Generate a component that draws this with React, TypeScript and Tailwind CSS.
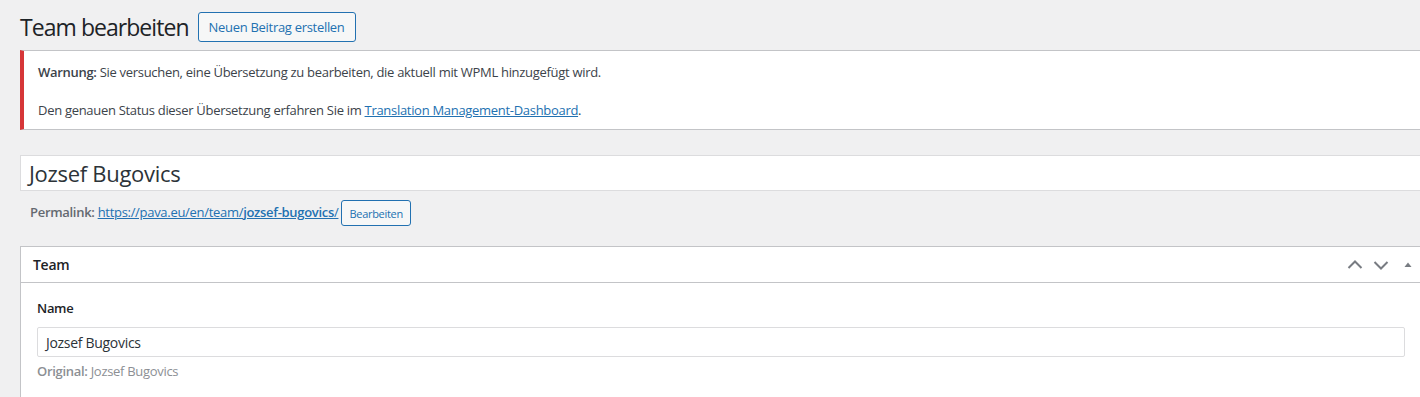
import { ReactNode } from 'react';

function ChevronUp() {
  return (
    <svg width="16" height="16" viewBox="0 0 16 16" fill="none" stroke="#787c82" strokeWidth="2">
      <path d="M1.5 11 L8 4.5 L14.5 11" />
    </svg>
  );
}

function ChevronDown() {
  return (
    <svg width="16" height="16" viewBox="0 0 16 16" fill="none" stroke="#787c82" strokeWidth="2">
      <path d="M1.5 5 L8 11.5 L14.5 5" />
    </svg>
  );
}

function Triangle() {
  return (
    <svg width="10" height="10" viewBox="0 0 10 10" fill="#787c82">
      <polygon points="1.5,7 5,2.5 8.5,7" />
    </svg>
  );
}

function OutlineButton({ children, small }: { children: ReactNode; small?: boolean }) {
  return (
    <button
      className={
        small
          ? 'h-[26px] rounded-[3px] border border-[#2271b1] bg-[#f6f7f7] px-[7px] text-[11px] leading-none tracking-[-0.3px] text-[#2271b1]'
          : 'h-[30px] rounded-[3px] border border-[#2271b1] bg-[#f6f7f7] px-[10px] text-[13px] leading-none tracking-[-0.3px] text-[#2271b1]'
      }
    >
      {children}
    </button>
  );
}

export default function App() {
  return (
    <div className="min-h-[397px] overflow-hidden bg-[#f0f0f1] pl-5 pt-3 font-['Open_Sans',sans-serif] text-[13px] tracking-[-0.3px] text-[#3c434a]">
      <div className="flex h-[30px] items-center gap-[9px]">
        <h1 className="text-[23px] leading-[30px] tracking-[-0.95px] text-[#1d2327]">Team bearbeiten</h1>
        <OutlineButton>Neuen Beitrag erstellen</OutlineButton>
      </div>

      <div className="mt-2 w-[1402px] border border-l-4 border-[#c3c4c7] border-l-[#d63638] bg-white pb-[9px] pl-[14px] pt-3 leading-[19px]">
        <p>
          <strong className="font-semibold">Warnung:</strong> Sie versuchen, eine Übersetzung zu bearbeiten, die aktuell
          mit WPML hinzugefügt wird.
        </p>
        <p className="h-[19px]" />
        <p>
          Den genauen Status dieser Übersetzung erfahren Sie im{' '}
          <a className="text-[#2271b1] underline">Translation Management-Dashboard</a>.
        </p>
      </div>

      <div className="mt-[25px] flex h-[36px] w-[1402px] items-center border border-[#dcdcde] bg-white px-2 text-[22px] tracking-[-0.3px] text-[#2c3338]">
        Jozsef Bugovics
      </div>

      <div className="mt-[9px] flex h-[26px] items-center gap-[3px] pl-[10px] text-[13px] text-[#646970]">
        <span>
          <strong className="font-semibold">Permalink:</strong>{' '}
          <a className="text-[#2271b1] underline">
            https://pava.eu/en/team/<strong className="font-semibold">jozsef-bugovics</strong>/
          </a>
        </span>
        <OutlineButton small>Bearbeiten</OutlineButton>
      </div>

      <div className="mt-5 w-[1402px] border border-[#c3c4c7] bg-white">
        <div className="flex h-[36px] items-center justify-between border-b border-[#c3c4c7] pl-3 pr-[8px]">
          <h2 className="text-[14px] font-semibold text-[#1d2327]">Team</h2>
          <div className="flex items-center">
            <ChevronUp />
            <span className="ml-[10px]">
              <ChevronDown />
            </span>
            <span className="ml-[14px]">
              <Triangle />
            </span>
          </div>
        </div>
        <div className="px-4 pb-4 pt-4">
          <label className="block text-[13px] font-semibold leading-[18px] text-[#1d2327]">Name</label>
          <div className="mt-[10px] flex h-[30px] items-center rounded-[2px] border border-[#dcdcde] px-2 text-[14px] text-[#2c3338]">
            Jozsef Bugovics
          </div>
          <p className="mt-[5px] text-[13px] text-[#8c8f94]">
            <span className="font-semibold">Original:</span> Jozsef Bugovics
          </p>
        </div>
      </div>
    </div>
  );
}
